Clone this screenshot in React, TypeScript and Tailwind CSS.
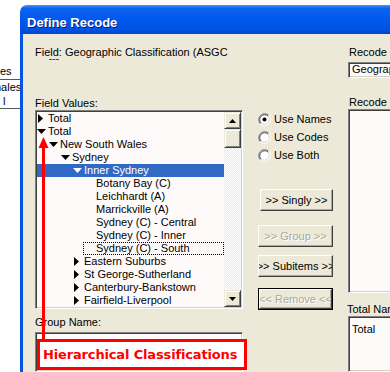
import React from "react";

type Row = { l: number; t: string; a?: "r" | "d"; sel?: boolean; focus?: boolean };

const rows: Row[] = [
  { l: 0, t: "Total", a: "r" },
  { l: 0, t: "Total", a: "d" },
  { l: 1, t: "New South Wales", a: "d" },
  { l: 2, t: "Sydney", a: "d" },
  { l: 3, t: "Inner Sydney", a: "d", sel: true },
  { l: 4, t: "Botany Bay (C)" },
  { l: 4, t: "Leichhardt (A)" },
  { l: 4, t: "Marrickville (A)" },
  { l: 4, t: "Sydney (C) - Central" },
  { l: 4, t: "Sydney (C) - Inner" },
  { l: 4, t: "Sydney (C) - South", focus: true },
  { l: 3, t: "Eastern Suburbs", a: "r" },
  { l: 3, t: "St George-Sutherland", a: "r" },
  { l: 3, t: "Canterbury-Bankstown", a: "r" },
  { l: 3, t: "Fairfield-Liverpool", a: "r" },
];

const indent = ["pl-0", "pl-[12px]", "pl-[24px]", "pl-[36px]", "pl-[48px]"];

const sunken =
  "border border-t-[#808080] border-l-[#808080] border-r-white border-b-white shadow-[inset_1px_1px_0_#404040,inset_-1px_-1px_0_#d4d0c8]";

function TriRight({ white }: { white?: boolean }) {
  return (
    <svg width="5" height="9" viewBox="0 0 5 9">
      <path d="M0 0 L5 4.5 L0 9 Z" fill={white ? "#fff" : "#000"} />
    </svg>
  );
}

function TriDown({ white }: { white?: boolean }) {
  return (
    <svg width="9" height="5" viewBox="0 0 9 5">
      <path d="M0 0 L9 0 L4.5 5 Z" fill={white ? "#fff" : "#000"} />
    </svg>
  );
}

function Radio({ on }: { on?: boolean }) {
  return (
    <svg width="13" height="13" viewBox="0 0 13 13">
      <circle cx="6.5" cy="6.5" r="6" fill="#fff" />
      <path d="M2.26 10.74 A6 6 0 0 1 10.74 2.26" stroke="#808080" fill="none" />
      <path d="M2.97 10.03 A5 5 0 0 1 10.03 2.97" stroke="#404040" fill="none" />
      <path d="M10.74 2.26 A6 6 0 0 1 2.26 10.74" stroke="#ffffff" fill="none" />
      <path d="M10.03 2.97 A5 5 0 0 1 2.97 10.03" stroke="#d4d0c8" fill="none" />
      {on && <circle cx="6.5" cy="6.5" r="2" fill="#000" />}
    </svg>
  );
}

function ScrollBtn({ dir }: { dir: "up" | "down" }) {
  return (
    <div className="h-[17px] shrink-0 bg-[#ece9d8] flex items-center justify-center border border-t-[#ece9d8] border-l-[#ece9d8] border-r-[#404040] border-b-[#404040] shadow-[inset_1px_1px_0_#fff,inset_-1px_-1px_0_#808080]">
      <svg width="7" height="4" viewBox="0 0 7 4">
        {dir === "up" ? <path d="M0 4 L7 4 L3.5 0 Z" fill="#000" /> : <path d="M0 0 L7 0 L3.5 4 Z" fill="#000" />}
      </svg>
    </div>
  );
}

function Btn({
  label,
  disabled,
  def,
  cls,
}: {
  label: string;
  disabled?: boolean;
  def?: boolean;
  cls: string;
}) {
  return (
    <div className={`${cls} h-[22px] bg-[#ece9d8] ${def ? "border border-black" : ""}`}>
      <div className="w-full h-full flex items-center justify-center overflow-hidden whitespace-nowrap border border-t-white border-l-white border-r-[#404040] border-b-[#404040] shadow-[inset_-1px_-1px_0_#aca899]">
        <span className={disabled ? "text-[#aca899] [text-shadow:1px_1px_0_#fff]" : "text-black"}>{label}</span>
      </div>
    </div>
  );
}

function Tree() {
  return (
    <div className={`h-[200px] flex bg-[#fffafa] p-[1px] ${sunken}`}>
      <div className="flex-1 min-w-0">
        {rows.map((r, i) => (
          <div
            key={i}
            className={`relative flex h-[13px] items-center ${indent[r.l]} ${r.sel ? "bg-[#316ac5] text-white" : "text-black"}`}
          >
            <div className={`w-[11px] h-[13px] flex items-center shrink-0 ${r.a === "r" ? "pl-[1px]" : "pl-0"}`}>
              {r.a === "r" && <TriRight white={r.sel} />}
              {r.a === "d" && <TriDown white={r.sel} />}
            </div>
            <span className="whitespace-nowrap leading-[13px]">{r.t}</span>
            {r.focus && (
              <span className="absolute left-[46px] right-0 top-0 bottom-0 border border-dotted border-black" />
            )}
          </div>
        ))}
      </div>
      <div className="w-[17px] shrink-0 flex flex-col">
        <ScrollBtn dir="up" />
        <div className="h-[19px] shrink-0 bg-[#ece9d8] border border-t-[#ece9d8] border-l-[#ece9d8] border-r-[#404040] border-b-[#404040] shadow-[inset_1px_1px_0_#fff,inset_-1px_-1px_0_#808080]" />
        <div className="flex-1 bg-[repeating-conic-gradient(#ece9d8_0_25%,#ffffff_0_50%)] bg-[length:2px_2px]" />
        <ScrollBtn dir="down" />
      </div>
    </div>
  );
}

export default function App() {
  return (
    <div className="relative w-[390px] h-[372px] overflow-hidden bg-white flex font-['Liberation_Sans',Arial,sans-serif] text-[11px] leading-[13px] text-black">
      {/* Background window fragment */}
      <div className="w-[20px] shrink-0 overflow-hidden pt-[63px] whitespace-nowrap">
        <div className="h-[17px] pt-[2px] border-b border-[#555]">es</div>
        <div className="h-[14px] -ml-[5px] pt-[1px]">nales</div>
        <div className="h-[15px] pl-[3px] pt-[1px] border-b border-[#555]">l</div>
      </div>

      {/* Dialog window */}
      <div className="flex-1 min-w-0 mt-[5px] flex flex-col rounded-tl-[7px] overflow-hidden">
        <div className="h-[29px] shrink-0 flex items-center pl-[7px] pt-[5px] bg-[linear-gradient(180deg,#3d95ff_0%,#0a64f0_12%,#0058ee_50%,#0053e3_85%,#0043cf_100%)]">
          <span className="text-white font-bold text-[13px] [text-shadow:1px_1px_0_#0a1a7a]">Define Recode</span>
        </div>
        <div className="flex-1 flex min-h-0">
          <div className="w-[3px] shrink-0 bg-[#0a55e0]" />
          <div className="flex-1 min-w-0 bg-[#ece9d8] pl-[12px] pt-[12px] flex overflow-hidden">
            {/* Left column */}
            <div className="w-[208px] shrink-0 flex flex-col">
              <div className="relative h-[13px] whitespace-nowrap">
                Field: Geographic Classification (ASGC
                <span className="absolute left-[14px] top-[13px] w-[10px] h-0 border-t border-dashed border-[#555]" />
              </div>
              <div className="mt-[38px] h-[13px]">Field Values:</div>
              <Tree />
              <div className="mt-[7px] h-[13px]">Group Name:</div>
              <div className={`mt-[3px] h-[60px] bg-[#fffafa] ${sunken}`} />
            </div>

            {/* Middle column */}
            <div className="w-[105px] shrink-0 flex flex-col pt-[64px]">
              <div className="h-[18px] flex items-center pl-[15px] gap-[3px]">
                <Radio on />
                <span>Use Names</span>
              </div>
              <div className="h-[18px] flex items-center pl-[15px] gap-[3px]">
                <Radio />
                <span>Use Codes</span>
              </div>
              <div className="h-[18px] flex items-center pl-[15px] gap-[3px]">
                <Radio />
                <span>Use Both</span>
              </div>
              <Btn label=">> Singly >>" cls="mt-[25px] ml-[17px] w-[73px]" />
              <Btn label=">> Group >>" disabled cls="mt-[14px] ml-[15px] w-[75px]" />
              <Btn label=">> Subitems >>" cls="mt-[8px] ml-[15px] w-[75px]" />
              <Btn label="<< Remove <<" disabled def cls="mt-[11px] ml-[15px] w-[75px]" />
            </div>

            {/* Right column */}
            <div className="w-[120px] shrink-0 flex flex-col">
              <div className="h-[13px] pl-[1px] whitespace-nowrap">Recode</div>
              <div className={`mt-[3px] h-[17px] bg-[#fffafa] pl-[3px] flex items-center whitespace-nowrap ${sunken}`}>
                Geographic
              </div>
              <div className="mt-[18px] h-[13px] pl-[1px] whitespace-nowrap">Recode</div>
              <div className={`h-[197px] bg-[#fffafa] ${sunken}`} />
              <div className="mt-[10px] h-[13px] -ml-[1px] whitespace-nowrap">Total Name:</div>
              <div className={`h-[60px] bg-[#fffafa] pl-[3px] pt-[6px] ${sunken}`}>Total</div>
            </div>
          </div>
        </div>
      </div>

      {/* Red annotation overlay */}
      <svg
        className="absolute left-[37px] top-[134px] pointer-events-none"
        width="13"
        height="206"
        viewBox="0 0 13 206"
      >
        <line x1="6.5" y1="12" x2="6.5" y2="206" stroke="#ff0000" strokeWidth="3" />
        <polygon points="1.5,14 6.5,3 11.5,14" fill="#ff0000" />
      </svg>
      <div className="absolute left-[37px] top-[339px] w-[210px] h-[31px] border-[3px] border-[#ff0000] bg-white flex items-center pl-[3px]">
        <span className="font-['DejaVu_Sans',Verdana,sans-serif] font-bold text-[13px] tracking-[-0.15px] text-[#ff0000] whitespace-nowrap">
          Hierarchical Classifications
        </span>
      </div>
    </div>
  );
}
